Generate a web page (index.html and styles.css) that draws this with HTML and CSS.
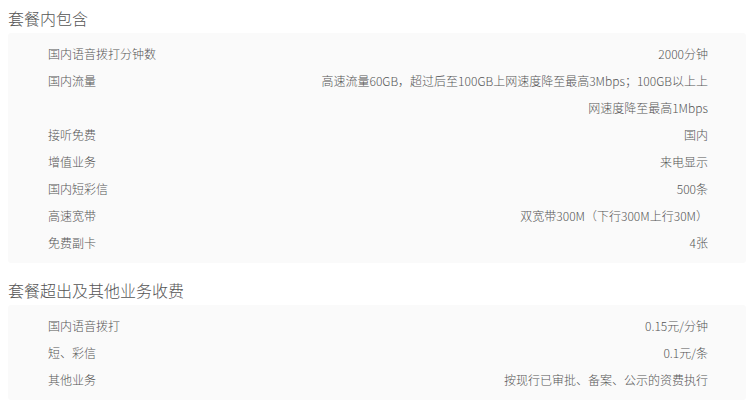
FILE: index.html
```html
<!DOCTYPE html>
<html lang="zh-CN">
<head>
    <meta charset="UTF-8">
    <meta name="viewport" content="width=device-width, initial-scale=1.0">
    <link rel="stylesheet" href="styles.css">
</head>
<body>
    <div class="plan">
        <h2 class="plan-title">套餐内包含</h2>
        <div class="plan-box">
            <div class="plan-row">
                <span class="plan-label">国内语音拨打分钟数</span>
                <span class="plan-value">2000分钟</span>
            </div>
            <div class="plan-row">
                <span class="plan-label">国内流量</span>
                <span class="plan-value">高速流量60GB，超过后至100GB上网速度降至最高3Mbps；100GB以上上<br>网速度降至最高1Mbps</span>
            </div>
            <div class="plan-row">
                <span class="plan-label">接听免费</span>
                <span class="plan-value">国内</span>
            </div>
            <div class="plan-row">
                <span class="plan-label">增值业务</span>
                <span class="plan-value">来电显示</span>
            </div>
            <div class="plan-row">
                <span class="plan-label">国内短彩信</span>
                <span class="plan-value">500条</span>
            </div>
            <div class="plan-row">
                <span class="plan-label">高速宽带</span>
                <span class="plan-value">双宽带300M（下行300M上行30M）</span>
            </div>
            <div class="plan-row">
                <span class="plan-label">免费副卡</span>
                <span class="plan-value">4张</span>
            </div>
        </div>

        <h2 class="plan-title second">套餐超出及其他业务收费</h2>
        <div class="plan-box">
            <div class="plan-row">
                <span class="plan-label">国内语音拨打</span>
                <span class="plan-value">0.15元/分钟</span>
            </div>
            <div class="plan-row">
                <span class="plan-label">短、彩信</span>
                <span class="plan-value">0.1元/条</span>
            </div>
            <div class="plan-row">
                <span class="plan-label">其他业务</span>
                <span class="plan-value">按现行已审批、备案、公示的资费执行</span>
            </div>
        </div>
    </div>
</body>
</html>
```

FILE: styles.css
```css
body {
    margin: 0;
    padding: 5px 5px 0 8px;
    font-family: "Noto Sans CJK SC", "Microsoft YaHei", sans-serif;
    font-weight: 300;
    color: #555;
    background: #fff;
}
.plan-title {
    margin: 0 0 2px 0;
    font-size: 16px;
    font-weight: 300;
    line-height: 26px;
    color: #555;
}
.plan-title.second {
    margin-top: 14px;
}
.plan-box {
    background-color: #fafafa;
    border-radius: 3px;
    padding: 7px 38px 7px 40px;
}
.plan-row {
    display: flex;
    justify-content: space-between;
    align-items: flex-start;
    font-size: 12px;
    line-height: 27px;
}
.plan-label {
    color: #555;
}
.plan-value {
    text-align: right;
    color: #555;
    white-space: nowrap;
}
```
